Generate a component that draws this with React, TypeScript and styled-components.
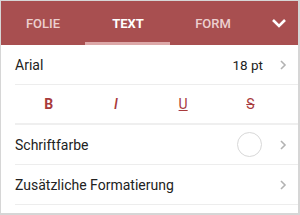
import React from 'react';
import styled, { createGlobalStyle } from 'styled-components';

const Global = createGlobalStyle`
  html, body { margin: 0; padding: 0; background: #fff; }
  body { font-family: Roboto, "Noto Sans", sans-serif; }
`;

const Panel = styled.div`
  width: 300px;
  height: 215px;
  box-sizing: border-box;
  border: 1px solid #d6d6d6;
  border-right-width: 2px;
  border-bottom-width: 2px;
  overflow: hidden;
  background: #fff;
`;

const TabBar = styled.div`
  display: flex;
  height: 45px;
  background: #a84f50;
  margin: -1px -2px 0 -1px;
`;

const Tab = styled.div<{ $active?: boolean }>`
  width: 85px;
  display: flex;
  align-items: center;
  justify-content: center;
  box-sizing: border-box;
  padding-top: 5px;
  padding-left: 1px;
  font-size: 13px;
  font-weight: ${(p) => (p.$active ? 700 : 500)};
  color: ${(p) => (p.$active ? '#ffffff' : '#eccfcf')};
  border-bottom: 3px solid ${(p) => (p.$active ? '#dca8a8' : 'transparent')};
`;

const MenuToggle = styled.div`
  flex: 1;
  display: flex;
  align-items: center;
  justify-content: center;
  padding-left: 2px;
  padding-top: 1px;
`;

const List = styled.div`
  padding-left: 14px;
`;

const Row = styled.div<{ $thick?: boolean }>`
  display: flex;
  align-items: center;
  height: 40px;
  box-sizing: border-box;
  border-bottom: ${(p) => (p.$thick ? '2px solid #efefef' : '1px solid #ededed')};
  padding-right: 10px;
  font-size: 14px;
  color: #222;
`;

const Label = styled.span`
  flex: 1;
`;

const Value = styled.span`
  font-size: 13.5px;
  margin-right: 15px;
  color: #222;
`;

const StyleButtons = styled.div`
  display: grid;
  grid-template-columns: repeat(4, 1fr);
  flex: 1;
  margin-right: 4px;
`;

const StyleButton = styled.span<{ $deco?: string; $italic?: boolean }>`
  text-align: center;
  font-size: 14px;
  color: #a83a3c;
  font-style: ${(p) => (p.$italic ? 'italic' : 'normal')};
  font-weight: ${(p) => (p.$deco ? 400 : p.$italic ? 500 : 700)};
  text-decoration: ${(p) => p.$deco || 'none'};
`;

const Swatch = styled.span`
  width: 25px;
  height: 25px;
  border-radius: 50%;
  border: 1px solid #d8d8d8;
  box-sizing: border-box;
  margin-right: 16px;
`;

const Chevron = () => (
  <svg width="10" height="14" viewBox="0 0 10 14">
    <path d="M3 3 L7 7 L3 11" fill="none" stroke="#b3b3b3" strokeWidth="1.6" />
  </svg>
);

export default function App() {
  return (
    <>
      <Global />
      <Panel>
        <TabBar>
          <Tab>FOLIE</Tab>
          <Tab $active>TEXT</Tab>
          <Tab>FORM</Tab>
          <MenuToggle>
            <svg width="16" height="12" viewBox="0 0 16 12">
              <path d="M2 3 L8 9 L14 3" fill="none" stroke="#fff" strokeWidth="2.6" />
            </svg>
          </MenuToggle>
        </TabBar>
        <List>
          <Row>
            <Label>Arial</Label>
            <Value>18 pt</Value>
            <Chevron />
          </Row>
          <Row $thick>
            <StyleButtons>
              <StyleButton>B</StyleButton>
              <StyleButton $italic>I</StyleButton>
              <StyleButton $deco="underline">U</StyleButton>
              <StyleButton $deco="line-through">S</StyleButton>
            </StyleButtons>
          </Row>
          <Row>
            <Label>Schriftfarbe</Label>
            <Swatch />
            <Chevron />
          </Row>
          <Row>
            <Label>Zusätzliche Formatierung</Label>
            <Chevron />
          </Row>
        </List>
      </Panel>
    </>
  );
}
